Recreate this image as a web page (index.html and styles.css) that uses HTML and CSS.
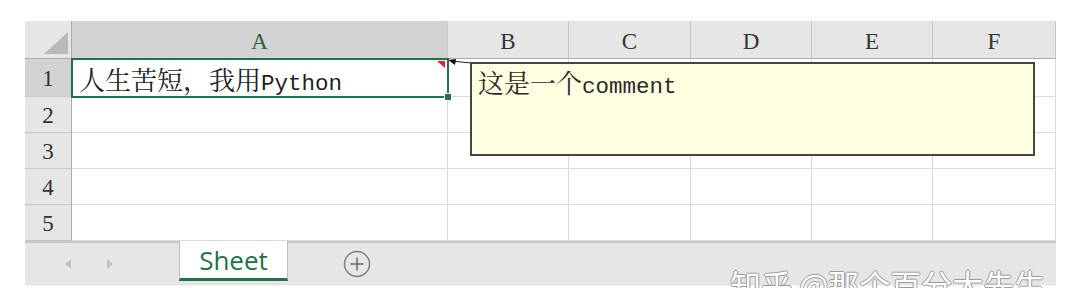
FILE: index.html
```html
<!DOCTYPE html>
<html lang="zh-CN">
<head>
    <meta charset="UTF-8">
    <title>Sheet - 批注</title>
    <link rel="stylesheet" href="styles.css">
</head>
<body>
<div id="sheet">
    <div id="grid">
        <div class="corner"><span class="corner-mark"></span></div>
        <div class="col-head head-on">A</div>
        <div class="col-head">B</div>
        <div class="col-head">C</div>
        <div class="col-head">D</div>
        <div class="col-head">E</div>
        <div class="col-head">F</div>

        <div class="row-head head-on">1</div>
        <div class="cell active">人生苦短，我用<span class="en">Python</span><i class="note-mark"></i><i class="fill-handle"></i></div>
        <div class="cell"></div><div class="cell"></div><div class="cell"></div><div class="cell"></div><div class="cell"></div>

        <div class="row-head">2</div>
        <div class="cell"></div><div class="cell"></div><div class="cell"></div><div class="cell"></div><div class="cell"></div><div class="cell"></div>

        <div class="row-head">3</div>
        <div class="cell"></div><div class="cell"></div><div class="cell"></div><div class="cell"></div><div class="cell"></div><div class="cell"></div>

        <div class="row-head">4</div>
        <div class="cell"></div><div class="cell"></div><div class="cell"></div><div class="cell"></div><div class="cell"></div><div class="cell"></div>

        <div class="row-head">5</div>
        <div class="cell"></div><div class="cell"></div><div class="cell"></div><div class="cell"></div><div class="cell"></div><div class="cell"></div>
    </div>

    <!-- 批注框和指向单元格的箭头 -->
    <svg class="note-arrow" width="26" height="10" viewBox="0 0 26 10">
        <line x1="4" y1="3" x2="24" y2="5" stroke="#222" stroke-width="1"/>
        <polygon points="1,2 9,1 8,7" fill="#111"/>
    </svg>
    <div id="comment">这是一个<span class="en">comment</span></div>

    <div id="tab_bar">
        <div class="nav-group">
            <span class="nav prev"></span>
            <span class="nav next"></span>
        </div>
        <div class="sheet-tab">Sheet</div>
        <span class="add-sheet">
            <svg width="28" height="28" viewBox="0 0 28 28">
                <circle cx="14" cy="14" r="12.5" fill="none" stroke="#7f7f7f" stroke-width="1.5"/>
                <line x1="7.5" y1="14" x2="20.5" y2="14" stroke="#6f6f6f" stroke-width="1.6"/>
                <line x1="14" y1="7.5" x2="14" y2="20.5" stroke="#6f6f6f" stroke-width="1.6"/>
            </svg>
        </span>
    </div>
</div>
<div class="watermark">知乎 @那个百分大先生</div>
</body>
</html>
```

FILE: styles.css
```css
*{
    margin: 0;
    padding: 0;
    box-sizing: border-box;
}
body{
    background: #fff;
    overflow: hidden;
    font-family: "Liberation Serif", "Noto Serif CJK SC", "Noto Sans CJK SC", serif;
    color: #222;
}
#sheet{
    position: relative;
    width: 1031px;
    margin: 21px 0 0 25px;
}
#grid{
    display: grid;
    grid-template-columns: 47px 376px 121px 122px 121px 121px 123px;
    grid-template-rows: 38px 38px 36px 36px 36px 36px;
}
.corner{
    position: relative;
    background: #e6e6e6;
    border-right: 1px solid #ababab;
    border-bottom: 1px solid #ababab;
}
.corner-mark{
    position: absolute;
    right: 3px;
    bottom: 4px;
    width: 24px;
    height: 22px;
    background: #b9b9b9;
    clip-path: polygon(100% 0, 100% 100%, 0 100%);
}
.col-head, .row-head{
    display: flex;
    align-items: center;
    justify-content: center;
    background: #e6e6e6;
    font-size: 23px;
    color: #333;
}
.col-head{
    border-right: 1px solid #c6c6c6;
    border-bottom: 1px solid #ababab;
    padding-top: 5px;
}
.row-head{
    border-right: 1px solid #ababab;
    border-bottom: 1px solid #c6c6c6;
    padding-top: 2px;
}
.head-on{
    background: #d3d3d3;
}
.col-head.head-on{
    color: #2a5f3f;
}
.cell{
    border-right: 1px solid #dadada;
    border-bottom: 1px solid #dadada;
    background: #fff;
}
.cell.active{
    position: relative;
    padding: 2px 0 0 7px;
    font-family: "Noto Serif CJK SC", "Noto Sans CJK SC", serif;
    font-size: 26px;
    line-height: 36px;
    color: #1f1f1f;
    white-space: nowrap;
    outline: 2px solid #217346;
    outline-offset: -1px;
    z-index: 1;
}
.en{
    font-family: "Liberation Mono", monospace;
    font-size: 22.5px;
}
.note-mark{
    position: absolute;
    top: 2px;
    right: 2px;
    width: 8px;
    height: 7px;
    background: #e0202a;
    clip-path: polygon(0 0, 100% 0, 100% 100%);
}
.fill-handle{
    position: absolute;
    right: -5px;
    bottom: -5px;
    width: 8px;
    height: 8px;
    background: #217346;
    border: 1px solid #fff;
}
.note-arrow{
    position: absolute;
    left: 422px;
    top: 37px;
}
#comment{
    position: absolute;
    left: 445px;
    top: 41px;
    width: 565px;
    height: 94px;
    padding: 1px 6px;
    background: #ffffe1;
    border: 2px solid #454545;
    font-family: "Noto Serif CJK SC", "Noto Sans CJK SC", serif;
    font-size: 26px;
    line-height: 34px;
    color: #2a2a2a;
    z-index: 2;
}
#tab_bar{
    display: flex;
    align-items: stretch;
    height: 45px;
    background: #e6e6e6;
    border-top: 2px solid #c6c6c6;
    border-bottom: 1px solid #f2f2f2;
}
.nav-group{
    display: flex;
    align-items: center;
    gap: 36px;
    width: 154px;
    padding-left: 40px;
}
.nav{
    width: 0;
    height: 0;
    border-top: 5px solid transparent;
    border-bottom: 5px solid transparent;
}
.nav.prev{
    border-right: 6px solid #c2c2c2;
}
.nav.next{
    border-left: 6px solid #c2c2c2;
}
.sheet-tab{
    display: flex;
    align-items: center;
    justify-content: center;
    width: 109px;
    height: 40px;
    margin-top: -2px;
    background: #fff;
    border-left: 1px solid #bdbdbd;
    border-right: 1px solid #bdbdbd;
    border-bottom: 3px solid #217346;
    font-family: "Open Sans", "Noto Sans", sans-serif;
    font-size: 26px;
    color: #217346;
}
.add-sheet{
    display: flex;
    align-items: center;
    margin-left: 55px;
}
.watermark{
    position: absolute;
    left: 730px;
    top: 268px;
    font-family: "Noto Sans CJK SC", sans-serif;
    font-size: 31px;
    line-height: 1;
    color: #fff;
    white-space: nowrap;
    text-shadow: 1px 0 #9a9a9a, -1px 0 #9a9a9a, 0 1px #9a9a9a, 0 -1px #9a9a9a;
}
```
